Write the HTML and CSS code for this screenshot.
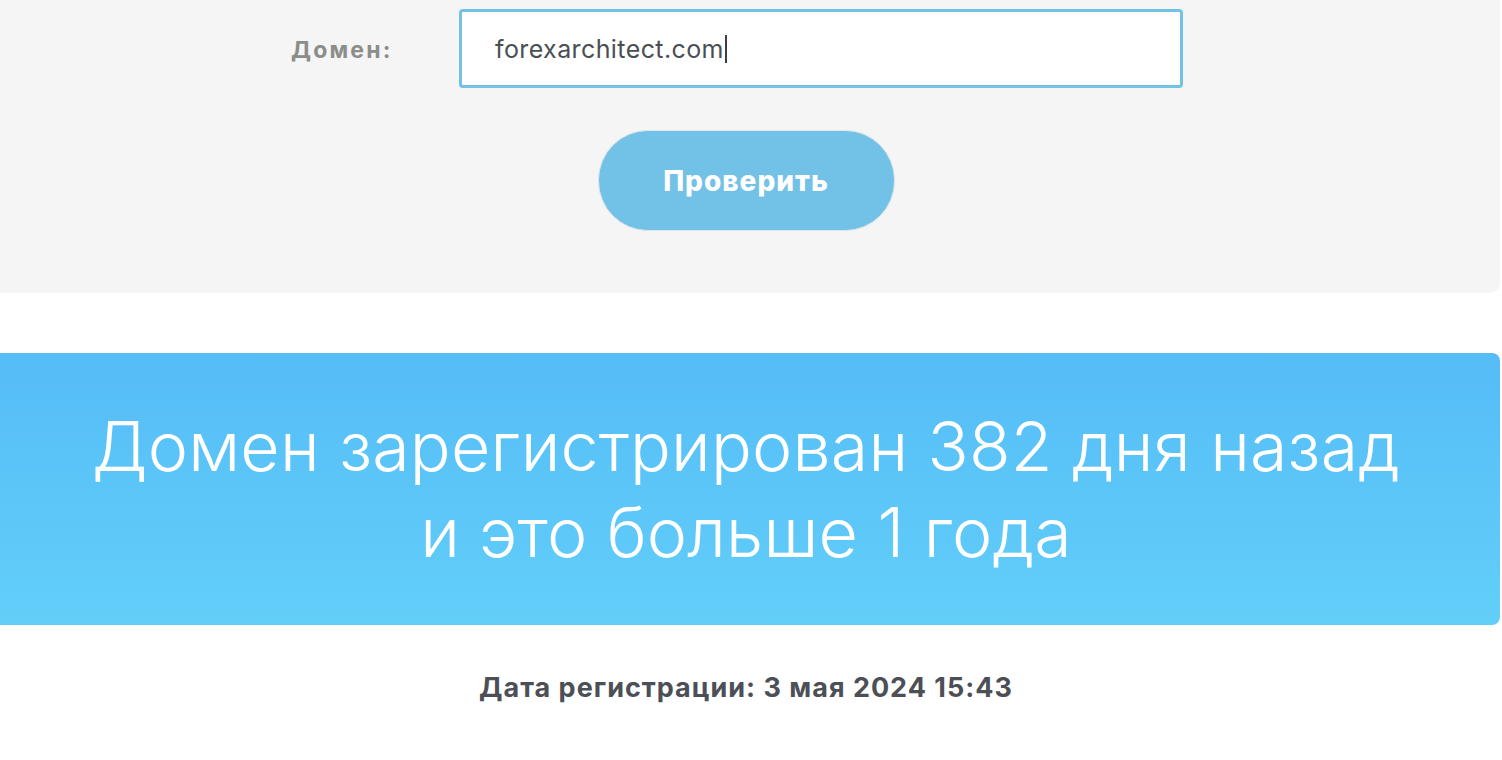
FILE: index.html
```html
<!DOCTYPE html>
<html lang="ru">
<head>
  <meta charset="UTF-8" />
  <meta name="viewport" content="width=device-width, initial-scale=1.0"/>
  <title>Проверка возраста домена</title>
  <link rel="stylesheet" href="styles.css">
</head>
<body>
  <div class="page">
    <form class="checkForm" onsubmit="return false">
      <div class="formRow">
        <label class="formLabel" for="domain">Домен:</label>
        <div class="inputBox">
          <span class="inputText">forexarchitect.com</span><span class="caret"></span>
        </div>
      </div>
      <div class="buttonRow">
        <button class="checkButton" type="submit">Проверить</button>
      </div>
    </form>

    <div class="result">
      <h2>Домен зарегистрирован 382 дня назад<br>и это больше 1 года</h2>
    </div>

    <p class="regDate">Дата регистрации: 3 мая 2024 15:43</p>
  </div>
</body>
</html>
```

FILE: styles.css
```css
body {
  margin: 0;
  background-color: #fff;
  font-family: Inter, "Noto Sans", sans-serif;
}

.page {
  width: 1500px;
}

.checkForm {
  background-color: #f4f5f4;
  border-bottom-right-radius: 10px;
  padding: 9px 0 62px;
}

.formRow {
  display: flex;
  align-items: center;
  padding-left: 291px;
}

.formLabel {
  width: 168px;
  margin-top: 3px;
  font-size: 23px;
  font-weight: 700;
  letter-spacing: 2.2px;
  color: #8b8d8b;
}

.inputBox {
  box-sizing: border-box;
  width: 724px;
  height: 79px;
  border: 3px solid #72c2e6;
  border-radius: 4px;
  background-color: #fff;
  display: flex;
  align-items: center;
  padding-left: 33px;
}

.inputText {
  font-size: 25px;
  letter-spacing: 0.4px;
  color: #4a4f55;
}

.caret {
  display: inline-block;
  width: 2px;
  height: 28px;
  background-color: #3a3f45;
  margin-left: 1px;
}

.buttonRow {
  display: flex;
  justify-content: center;
  padding-right: 8px;
  margin-top: 42px;
}

.checkButton {
  width: 297px;
  height: 101px;
  border: 1px solid #dfe6e9;
  border-radius: 50px;
  background-color: #72c1e6;
  color: #fff;
  font-family: inherit;
  font-size: 28px;
  font-weight: 800;
  letter-spacing: 1px;
  cursor: pointer;
}

.result {
  margin-top: 60px;
  height: 272px;
  border-top-right-radius: 8px;
  border-bottom-right-radius: 8px;
  background: linear-gradient(to bottom, #55bcf7, #62cff9);
  display: flex;
  align-items: center;
  justify-content: center;
  padding-right: 8px;
}

.result h2 {
  margin: 0;
  color: #fff;
  font-size: 68px;
  font-weight: 300;
  letter-spacing: 0.2px;
  line-height: 86px;
  text-align: center;
}

.regDate {
  margin: 46px 0 0;
  padding-right: 8px;
  text-align: center;
  color: #4c5056;
  font-size: 27px;
  font-weight: 700;
  letter-spacing: 1px;
}
```
